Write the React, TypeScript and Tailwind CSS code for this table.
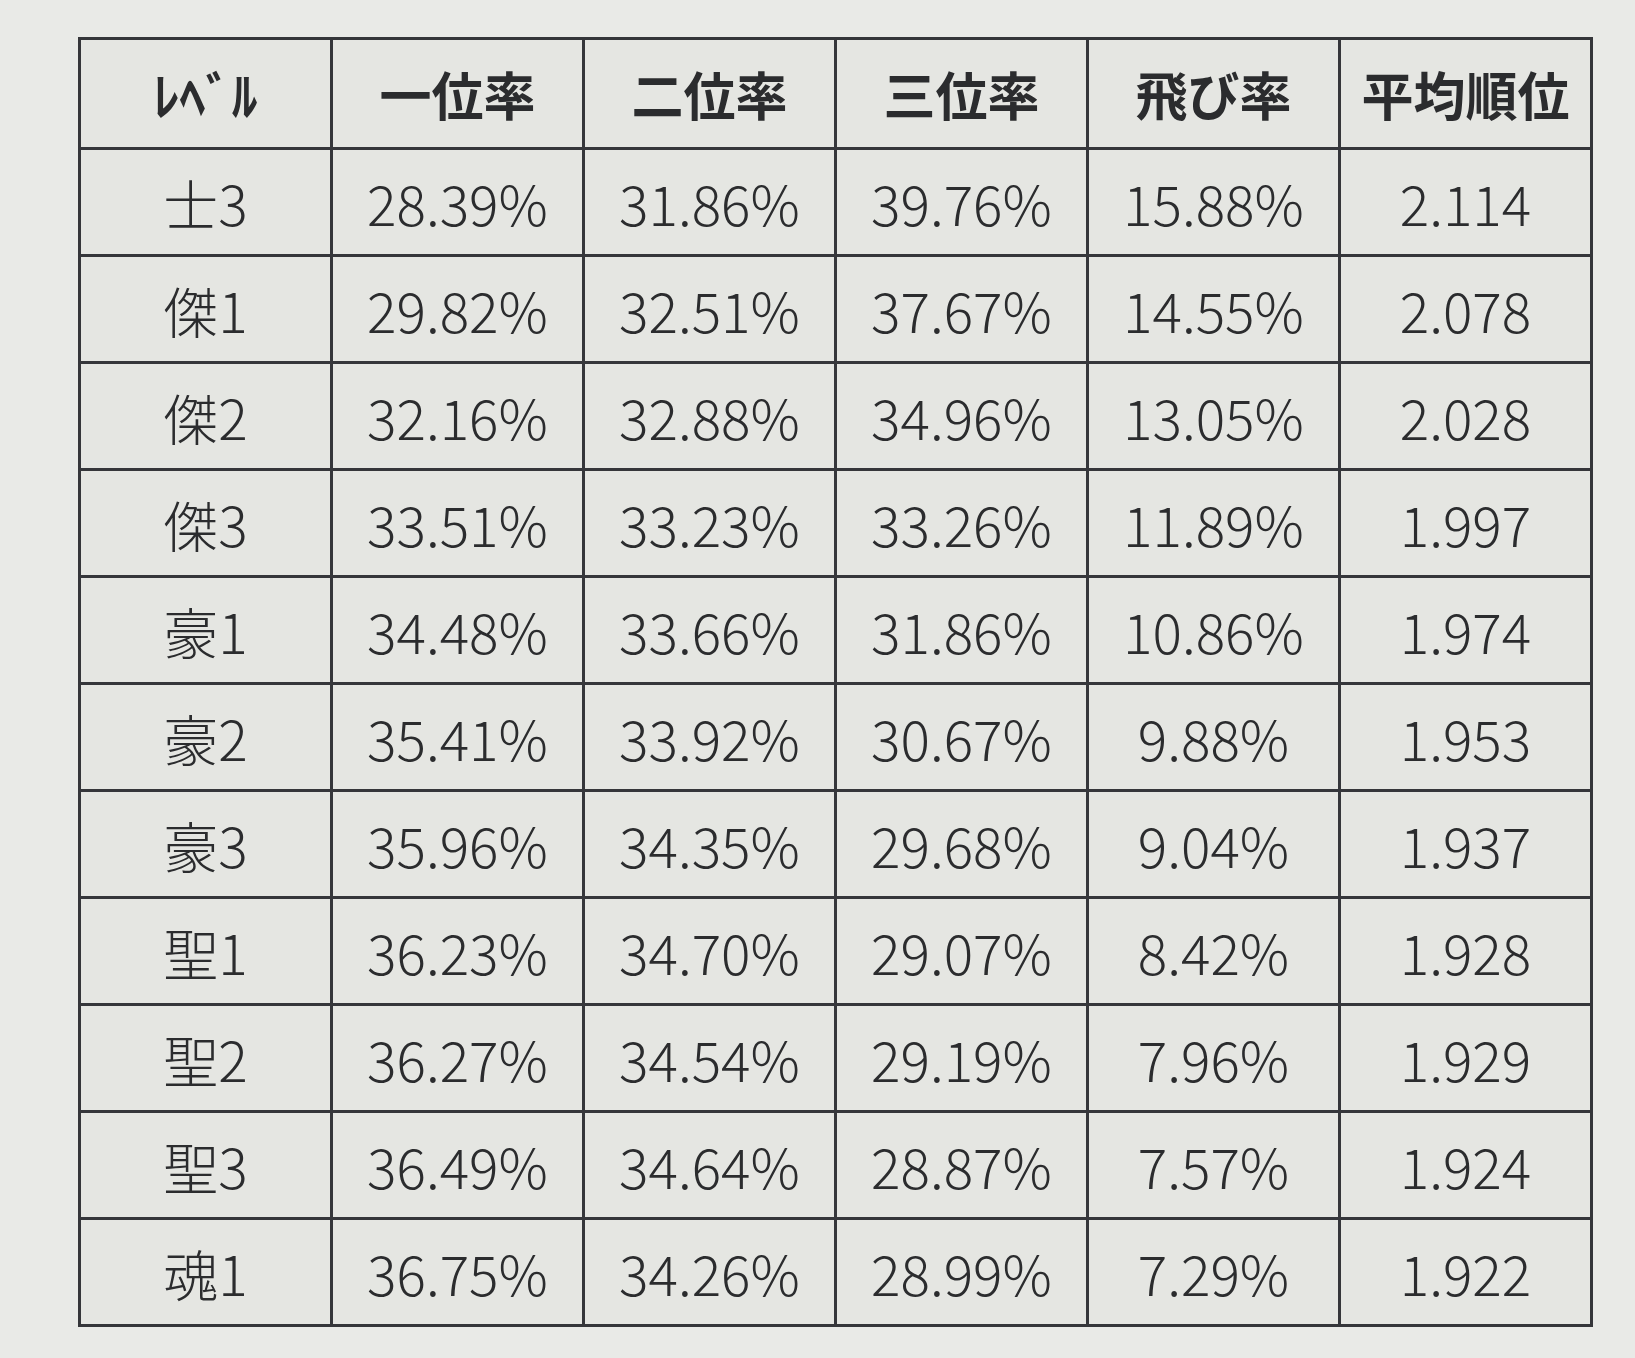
import React from "react";

const headers = ["ﾚﾍﾞﾙ", "一位率", "二位率", "三位率", "飛び率", "平均順位"];

const rows: string[][] = [
  ["士3", "28.39%", "31.86%", "39.76%", "15.88%", "2.114"],
  ["傑1", "29.82%", "32.51%", "37.67%", "14.55%", "2.078"],
  ["傑2", "32.16%", "32.88%", "34.96%", "13.05%", "2.028"],
  ["傑3", "33.51%", "33.23%", "33.26%", "11.89%", "1.997"],
  ["豪1", "34.48%", "33.66%", "31.86%", "10.86%", "1.974"],
  ["豪2", "35.41%", "33.92%", "30.67%", "9.88%", "1.953"],
  ["豪3", "35.96%", "34.35%", "29.68%", "9.04%", "1.937"],
  ["聖1", "36.23%", "34.70%", "29.07%", "8.42%", "1.928"],
  ["聖2", "36.27%", "34.54%", "29.19%", "7.96%", "1.929"],
  ["聖3", "36.49%", "34.64%", "28.87%", "7.57%", "1.924"],
  ["魂1", "36.75%", "34.26%", "28.99%", "7.29%", "1.922"],
];

export default function App() {
  return (
    <div
      className="w-[1635px] h-[1358px] bg-[#e9eae7] pt-[37px] pl-[78px] overflow-hidden"
      style={{ fontFamily: '"Noto Sans CJK JP", "Noto Sans", sans-serif' }}
    >
      <table className="border-collapse table-fixed w-[1512px] bg-[#e5e6e2] text-[#2b2c2e]">
        <thead>
          <tr className="h-[110px]">
            {headers.map((h) => (
              <th
                key={h}
                className="w-[252px] border-[3px] border-[#35363a] text-[52px] font-bold leading-none text-center align-middle"
              >
                {h}
              </th>
            ))}
          </tr>
        </thead>
        <tbody>
          {rows.map((r) => (
            <tr key={r[0]} className="h-[107px]">
              {r.map((c, i) => (
                <td
                  key={i}
                  className="border-[3px] border-[#35363a] text-[55px] font-light leading-none text-center align-middle"
                >
                  {c}
                </td>
              ))}
            </tr>
          ))}
        </tbody>
      </table>
    </div>
  );
}
